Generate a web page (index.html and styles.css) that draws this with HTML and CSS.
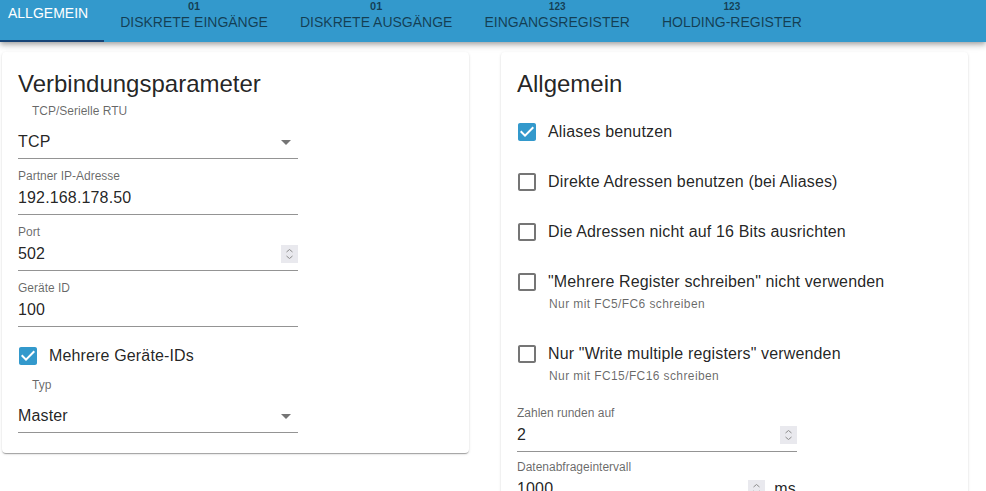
FILE: index.html
```html
<!DOCTYPE html>
<html lang="de">
<head>
<meta charset="utf-8">
<title>Modbus – Allgemein</title>
<link rel="stylesheet" href="styles.css">
</head>
<body>
<header class="appbar">
  <nav class="tabs">
    <div class="tab tab-active"><span class="tab-label">Allgemein</span></div>
    <div class="tab"><span class="tab-icon">01</span><span class="tab-label">Diskrete Eingänge</span></div>
    <div class="tab"><span class="tab-icon">01</span><span class="tab-label">Diskrete Ausgänge</span></div>
    <div class="tab"><span class="tab-icon tab-icon-small">123</span><span class="tab-label">Eingangsregister</span></div>
    <div class="tab"><span class="tab-icon tab-icon-small">123</span><span class="tab-label">Holding-Register</span></div>
  </nav>
</header>

<main class="content">
  <section class="card">
    <h2 class="card-title">Verbindungsparameter</h2>

    <div class="field select-field">
      <div class="field-label">TCP/Serielle RTU</div>
      <div class="field-input">
        <span class="field-value">TCP</span>
        <svg class="dropdown" width="10" height="5" viewBox="0 0 10 5"><polygon points="0,0 10,0 5,5" fill="#757575"/></svg>
      </div>
    </div>

    <div class="field text-field">
      <div class="field-label">Partner IP-Adresse</div>
      <div class="field-input"><span class="field-value">192.168.178.50</span></div>
    </div>

    <div class="field text-field">
      <div class="field-label">Port</div>
      <div class="field-input">
        <span class="field-value">502</span>
        <svg class="spinner" width="17" height="18" viewBox="0 0 17 18"><rect width="17" height="18" fill="#e9e9ee"/><polyline points="5.5,7 8.5,4.5 11.5,7" fill="none" stroke="#8c8c8c"/><polyline points="5.5,11 8.5,13.5 11.5,11" fill="none" stroke="#8c8c8c"/></svg>
      </div>
    </div>

    <div class="field text-field">
      <div class="field-label">Geräte ID</div>
      <div class="field-input"><span class="field-value">100</span></div>
    </div>

    <div class="check-row check-row-left">
      <span class="check-box">
        <svg width="24" height="24" viewBox="0 0 24 24"><path fill="#3399cc" d="M19 3H5c-1.11 0-2 .9-2 2v14c0 1.1.89 2 2 2h14c1.11 0 2-.9 2-2V5c0-1.1-.89-2-2-2zm-9 14l-5-5 1.41-1.41L10 14.17l7.59-7.59L19 8l-9 9z"/></svg>
      </span>
      <div class="check-text"><div class="check-label">Mehrere Geräte-IDs</div></div>
    </div>

    <div class="field select-field select-field-second">
      <div class="field-label">Typ</div>
      <div class="field-input">
        <span class="field-value">Master</span>
        <svg class="dropdown" width="10" height="5" viewBox="0 0 10 5"><polygon points="0,0 10,0 5,5" fill="#757575"/></svg>
      </div>
    </div>
  </section>

  <section class="card">
    <h2 class="card-title">Allgemein</h2>

    <div class="check-row check-row-first">
      <span class="check-box">
        <svg width="24" height="24" viewBox="0 0 24 24"><path fill="#3399cc" d="M19 3H5c-1.11 0-2 .9-2 2v14c0 1.1.89 2 2 2h14c1.11 0 2-.9 2-2V5c0-1.1-.89-2-2-2zm-9 14l-5-5 1.41-1.41L10 14.17l7.59-7.59L19 8l-9 9z"/></svg>
      </span>
      <div class="check-text"><div class="check-label">Aliases benutzen</div></div>
    </div>

    <div class="check-row">
      <span class="check-box">
        <svg width="24" height="24" viewBox="0 0 24 24"><path fill="#757575" d="M19 5v14H5V5h14m0-2H5c-1.1 0-2 .9-2 2v14c0 1.1.9 2 2 2h14c1.1 0 2-.9 2-2V5c0-1.1-.9-2-2-2z"/></svg>
      </span>
      <div class="check-text"><div class="check-label">Direkte Adressen benutzen (bei Aliases)</div></div>
    </div>

    <div class="check-row">
      <span class="check-box">
        <svg width="24" height="24" viewBox="0 0 24 24"><path fill="#757575" d="M19 5v14H5V5h14m0-2H5c-1.1 0-2 .9-2 2v14c0 1.1.9 2 2 2h14c1.1 0 2-.9 2-2V5c0-1.1-.9-2-2-2z"/></svg>
      </span>
      <div class="check-text"><div class="check-label">Die Adressen nicht auf 16 Bits ausrichten</div></div>
    </div>

    <div class="check-row check-row-helper">
      <span class="check-box">
        <svg width="24" height="24" viewBox="0 0 24 24"><path fill="#757575" d="M19 5v14H5V5h14m0-2H5c-1.1 0-2 .9-2 2v14c0 1.1.9 2 2 2h14c1.1 0 2-.9 2-2V5c0-1.1-.9-2-2-2z"/></svg>
      </span>
      <div class="check-text">
        <div class="check-label">"Mehrere Register schreiben" nicht verwenden</div>
        <div class="check-helper">Nur mit FC5/FC6 schreiben</div>
      </div>
    </div>

    <div class="check-row check-row-helper">
      <span class="check-box">
        <svg width="24" height="24" viewBox="0 0 24 24"><path fill="#757575" d="M19 5v14H5V5h14m0-2H5c-1.1 0-2 .9-2 2v14c0 1.1.9 2 2 2h14c1.1 0 2-.9 2-2V5c0-1.1-.9-2-2-2z"/></svg>
      </span>
      <div class="check-text">
        <div class="check-label">Nur "Write multiple registers" verwenden</div>
        <div class="check-helper">Nur mit FC15/FC16 schreiben</div>
      </div>
    </div>

    <div class="field right-field right-field-first">
      <div class="field-label">Zahlen runden auf</div>
      <div class="field-input">
        <span class="field-value">2</span>
        <svg class="spinner" width="17" height="18" viewBox="0 0 17 18"><rect width="17" height="18" fill="#e9e9ee"/><polyline points="5.5,7 8.5,4.5 11.5,7" fill="none" stroke="#8c8c8c"/><polyline points="5.5,11 8.5,13.5 11.5,11" fill="none" stroke="#8c8c8c"/></svg>
      </div>
    </div>

    <div class="field right-field">
      <div class="field-label">Datenabfrageintervall</div>
      <div class="field-input">
        <span class="field-value">1000</span>
        <svg class="spinner" width="17" height="18" viewBox="0 0 17 18"><rect width="17" height="18" fill="#e9e9ee"/><polyline points="5.5,7 8.5,4.5 11.5,7" fill="none" stroke="#8c8c8c"/><polyline points="5.5,11 8.5,13.5 11.5,11" fill="none" stroke="#8c8c8c"/></svg>
        <span class="adornment">ms</span>
      </div>
    </div>
  </section>
</main>
</body>
</html>
```

FILE: styles.css
```css
html, body {
  margin: 0;
  padding: 0;
  background: #ffffff;
  overflow: hidden;
}

body {
  font-family: "Liberation Sans", Arial, sans-serif;
  color: rgba(0, 0, 0, 0.87);
}

/* ---------- App bar / tabs ---------- */
.appbar {
  position: relative;
  z-index: 1;
  height: 42px;
  background: #3399cc;
  box-shadow: 0 2px 4px -1px rgba(0, 0, 0, 0.2), 0 4px 5px 0 rgba(0, 0, 0, 0.14), 0 1px 10px 0 rgba(0, 0, 0, 0.12);
}

.tabs {
  display: flex;
  height: 42px;
}

.tab {
  box-sizing: border-box;
  height: 42px;
  padding: 0 16px;
  display: flex;
  flex-direction: column;
  align-items: center;
  font-size: 14px;
  color: rgba(0, 0, 0, 0.6);
  white-space: nowrap;
}

.tab-active {
  padding: 5px 16px 0 8px;
  color: #ffffff;
  border-bottom: 2px solid #164477;
}

.tab-icon {
  display: block;
  height: 12px;
  padding-top: 2px;
  line-height: 9px;
  font-size: 11px;
  font-weight: bold;
}

.tab-icon-small {
  font-size: 10px;
}

.tab-label {
  display: block;
  line-height: 16px;
  text-transform: uppercase;
}

/* ---------- Content ---------- */
.content {
  display: grid;
  grid-template-columns: 1fr 1fr;
  column-gap: 32px;
  align-items: start;
  padding: 10px 18px 0 2px;
}

.card {
  background: #ffffff;
  border-radius: 4px;
  padding: 16px 16px 20px;
  box-shadow: 0 2px 1px -1px rgba(0, 0, 0, 0.2), 0 1px 1px 0 rgba(0, 0, 0, 0.14), 0 1px 3px 0 rgba(0, 0, 0, 0.12);
}

.card-title {
  margin: 0;
  font-size: 24px;
  font-weight: 400;
  line-height: 32px;
  color: rgba(0, 0, 0, 0.87);
}

/* ---------- Fields ---------- */
.field {
  width: 280px;
}

.field-label {
  font-size: 12px;
  line-height: 14px;
  color: rgba(0, 0, 0, 0.6);
  white-space: nowrap;
}

.field-input {
  display: flex;
  align-items: center;
  height: 30px;
  padding-bottom: 1px;
  border-bottom: 1px solid rgba(0, 0, 0, 0.42);
  font-size: 16px;
  letter-spacing: 0.15px;
}

.field-value {
  flex: 1;
}

.select-field {
  padding-top: 4px;
}

.select-field .field-label {
  padding-left: 14px;
}

.select-field .field-input {
  margin-top: 9px;
}

.select-field-second {
  padding-top: 1px;
}

.text-field {
  margin-top: 10px;
}

.dropdown {
  margin-right: 7px;
}

.spinner {
  display: block;
}

.adornment {
  margin-left: 9px;
  margin-right: 1px;
  color: rgba(0, 0, 0, 0.87);
}

.right-field {
  margin-top: 8px;
}

.right-field-first {
  margin-top: 9px;
}

/* ---------- Checkboxes ---------- */
.check-row {
  display: flex;
  align-items: flex-start;
  margin-top: 8px;
}

.check-row-first {
  margin-top: 11px;
}

.check-row-helper {
  padding-bottom: 14px;
}

.check-box {
  box-sizing: border-box;
  width: 42px;
  height: 42px;
  padding: 9px;
  margin-left: -11px;
  flex: none;
}

.check-box svg {
  display: block;
}

.check-text {
  padding-top: 9px;
}

.check-label {
  font-size: 16px;
  line-height: 24px;
  letter-spacing: 0.15px;
  white-space: nowrap;
}

.check-helper {
  margin-top: 3px;
  padding-left: 1px;
  font-size: 12px;
  line-height: 14px;
  letter-spacing: 0.4px;
  color: rgba(0, 0, 0, 0.6);
}
```
